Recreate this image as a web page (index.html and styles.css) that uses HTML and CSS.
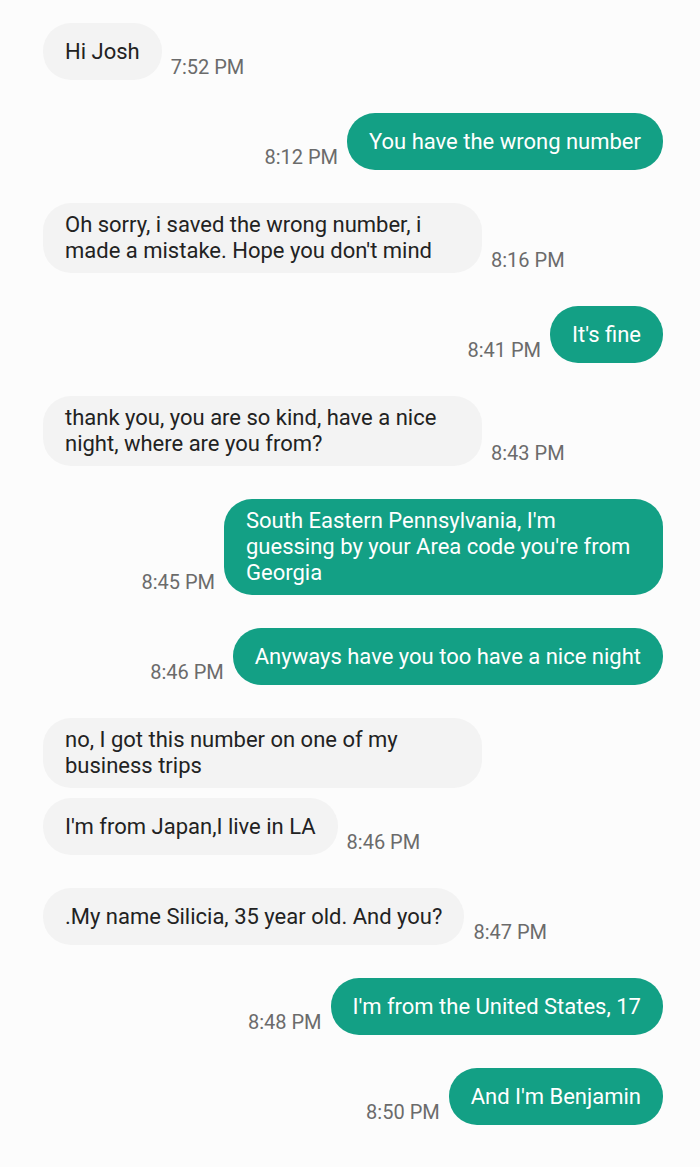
FILE: index.html
```html
<!DOCTYPE html>
<html lang="en">
<head>
  <meta charset="UTF-8">
  <title>Messages</title>
  <link rel="stylesheet" href="styles.css">
</head>
<body>

<div class="thread">
  <div class="row in">
    <div class="bubble">Hi Josh</div>
    <span class="time">7:52 PM</span>
  </div>

  <div class="row out">
    <span class="time">8:12 PM</span>
    <div class="bubble">You have the wrong number</div>
  </div>

  <div class="row in">
    <div class="bubble">Oh sorry, i saved the wrong number, i made a mistake. Hope you don't mind</div>
    <span class="time">8:16 PM</span>
  </div>

  <div class="row out">
    <span class="time">8:41 PM</span>
    <div class="bubble">It's fine</div>
  </div>

  <div class="row in">
    <div class="bubble">thank you, you are so kind, have a nice night, where are you from?</div>
    <span class="time">8:43 PM</span>
  </div>

  <div class="row out">
    <span class="time">8:45 PM</span>
    <div class="bubble">South Eastern Pennsylvania, I'm guessing by your Area code you're from Georgia</div>
  </div>

  <div class="row out">
    <span class="time">8:46 PM</span>
    <div class="bubble">Anyways have you too have a nice night</div>
  </div>

  <div class="group">
    <div class="row in">
      <div class="bubble">no, I got this number on one of my business trips</div>
    </div>
    <div class="row in">
      <div class="bubble">I'm from Japan,I live in LA</div>
      <span class="time">8:46 PM</span>
    </div>
  </div>

  <div class="row in">
    <div class="bubble">.My name Silicia, 35 year old. And you?</div>
    <span class="time">8:47 PM</span>
  </div>

  <div class="row out">
    <span class="time">8:48 PM</span>
    <div class="bubble">I'm from the United States, 17</div>
  </div>

  <div class="row out">
    <span class="time">8:50 PM</span>
    <div class="bubble">And I'm Benjamin</div>
  </div>
</div>

</body>
</html>
```

FILE: styles.css
```css
body {
  margin: 0;
  background-color: #fcfcfc;
  font-family: Roboto, "Noto Sans", sans-serif;
}

.thread {
  display: flex;
  flex-direction: column;
  gap: 33px;
  padding: 23px 37px 0 43px;
}

.group {
  display: flex;
  flex-direction: column;
  gap: 10px;
}

.row {
  display: flex;
  align-items: flex-end;
  gap: 9px;
}

.row.out {
  justify-content: flex-end;
}

.bubble {
  box-sizing: border-box;
  max-width: 439px;
  min-height: 57px;
  padding: 9px 22px;
  border-radius: 28px;
  font-size: 22px;
  line-height: 26px;
  display: flex;
  align-items: center;
}

.in .bubble {
  background-color: #f3f3f3;
  color: #222;
}

.out .bubble {
  background-color: #13a085;
  color: #fff;
}

.time {
  font-size: 20px;
  line-height: 22px;
  color: #6b6b6b;
  margin-bottom: 2px;
  white-space: nowrap;
}
```
